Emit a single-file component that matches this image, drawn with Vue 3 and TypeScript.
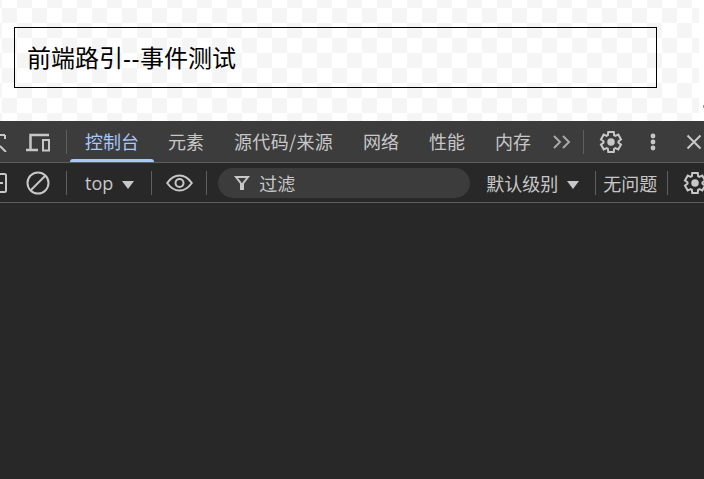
<script setup lang="ts">
const tabs = [
  { label: '元素', wide: false },
  { label: '源代码/来源', wide: true },
  { label: '网络', wide: false },
  { label: '性能', wide: false },
  { label: '内存', wide: false },
]
const gearPath =
  'M370-80l-16-128q-13-5-24.500-12T307-235l-119 50L78-375l103-78q-1-7-1-13.500v-27q0-6.500 1-13.500L78-585l110-190 119 50q11-8 23-15t24-12l16-128h220l16 128q13 5 24.500 12t22.500 15l119-50 110 190-103 78q1 7 1 13.500v27q0 6.500-2 13.500l103 78-110 190-118-50q-11 8-23 15t-24 12L590-80H370Z'
</script>

<template>
  <div class="page">
    <section class="preview">
      <div class="checker">
        <div class="box">前端路引<span class="dash">--</span>事件测试</div>
      </div>
      <i class="handle"></i>
    </section>
    <section class="devtools">
      <div class="tabbar">
        <svg class="inspect" viewBox="0 0 7 20" width="7" height="20"><path d="M0 3h5M5 3v4M0 14l6 6" fill="none" stroke="#c7c7c7" stroke-width="2"/></svg>
        <svg class="device" viewBox="0 0 24 20" width="24" height="20"><path d="M0 18h12M4.500 18V3H23" fill="none" stroke="#c7c7c7" stroke-width="2.500"/><rect x="17" y="8" width="6" height="10.500" fill="none" stroke="#c7c7c7" stroke-width="2"/></svg>
        <i class="sep tab-sep"></i>
        <span class="tab active">控制台</span>
        <span v-for="t in tabs" :key="t.label" class="tab" :class="{ wide: t.wide }">{{ t.label }}</span>
        <svg class="more" viewBox="0 0 20 14" width="20" height="14"><path d="M2 1l6 6-6 6M11 1l6 6-6 6" fill="none" stroke="#a8a8a8" stroke-width="2"/></svg>
        <i class="sep more-sep"></i>
        <svg class="gear" viewBox="0 -960 960 960" width="24" height="24"><path :d="gearPath" fill="none" stroke="#c7c7c7" stroke-width="80"/><circle cx="480" cy="-480" r="150" fill="#c7c7c7"/></svg>
        <svg class="dots" viewBox="0 0 6 18" width="6" height="18"><circle cx="3" cy="3" r="2.400" fill="#c7c7c7"/><circle cx="3" cy="9" r="2.400" fill="#c7c7c7"/><circle cx="3" cy="15" r="2.400" fill="#c7c7c7"/></svg>
        <svg class="close" viewBox="0 0 16 16" width="16" height="16"><path d="M1.500 1.500l13 13M14.500 1.500l-13 13" stroke="#c7c7c7" stroke-width="2"/></svg>
      </div>
      <div class="filterbar">
        <svg class="sidebar" viewBox="0 0 7 20" width="7" height="20"><path d="M0 1h4.500a1.500 1.500 0 0 1 1.500 1.500v15a1.500 1.500 0 0 1-1.500 1.500H0M0 10h3" fill="none" stroke="#c7c7c7" stroke-width="2"/></svg>
        <svg class="clear" viewBox="0 0 24 24" width="24" height="24"><circle cx="12" cy="12" r="10.500" fill="none" stroke="#c7c7c7" stroke-width="2"/><path d="M5 19L19 5" stroke="#c7c7c7" stroke-width="2"/></svg>
        <i class="sep s1"></i>
        <span class="context">top</span>
        <i class="caret"></i>
        <i class="sep s2"></i>
        <svg class="eye" viewBox="0 0 27 18" width="27" height="18"><path d="M1.200 9C5 3.500 9 1.500 13.500 1.500S22 3.500 25.800 9C22 14.500 18 16.500 13.500 16.500S5 14.500 1.200 9z" fill="none" stroke="#c7c7c7" stroke-width="2"/><circle cx="13.500" cy="9" r="4" fill="none" stroke="#c7c7c7" stroke-width="2"/></svg>
        <i class="sep s3"></i>
        <div class="search">
          <svg viewBox="0 0 16 16" width="16" height="16"><path d="M2 2h12L9 8.500V14H7V8.500z" fill="#3c3c3c" stroke="#c7c7c7" stroke-width="2"/></svg>
          <span>过滤</span>
        </div>
        <span class="level">默认级别</span>
        <i class="caret"></i>
        <i class="sep s4"></i>
        <span class="issues">无问题</span>
        <i class="sep s5"></i>
        <svg class="gear2" viewBox="0 -960 960 960" width="24" height="24"><path :d="gearPath" fill="none" stroke="#c7c7c7" stroke-width="80"/><circle cx="480" cy="-480" r="150" fill="#c7c7c7"/></svg>
      </div>
      <div class="console"></div>
    </section>
  </div>
</template>

<style>
html, body { margin: 0; background: #fff; overflow: hidden; }
</style>

<style scoped>
.page {
  width: 704px;
  height: 479px;
  display: flex;
  flex-direction: column;
  overflow: hidden;
  font-family: "Liberation Sans", "Noto Sans CJK SC", sans-serif;
}
.preview {
  height: 121px;
  flex: none;
  background: #fff;
  position: relative;
}
.handle {
  position: absolute;
  right: 0;
  top: 105px;
  width: 1px;
  height: 3px;
  background: #9a9a9a;
}
.checker {
  width: 699px;
  height: 121px;
  box-sizing: border-box;
  padding: 27px 42px 0 14px;
  background-color: #fff;
  background-image: conic-gradient(#f5f5f5 25%, #fff 0 50%, #f5f5f5 0 75%, #fff 0);
  background-size: 30px 30px;
  background-position: 17px 8px;
}
.box {
  height: 61px;
  box-sizing: border-box;
  border: 1px solid #000;
  padding-left: 12px;
  font-size: 24px;
  line-height: 62px;
  color: #000;
}
.dash { letter-spacing: 0.5px; }
.devtools {
  flex: 1;
  display: flex;
  flex-direction: column;
  background: #282828;
  color: #c7c7c7;
  overflow: hidden;
}
.tabbar {
  height: 42px;
  flex: none;
  display: flex;
  align-items: center;
  background: #3c3c3c;
  border-bottom: 1px solid #5e5e5e;
  box-sizing: border-box;
  font-family: "Noto Sans CJK SC", sans-serif;
  font-size: 18px;
  white-space: nowrap;
}
.tabbar > * { flex: none; }
.device { margin-left: 19px; }
.sep { display: block; width: 1px; height: 24px; background: #5e5e5e; flex: none; }
.tab-sep { margin-left: 16px; }
.tab {
  padding: 0 15px;
  line-height: 41px;
}
.tab.wide { letter-spacing: 0.33px; }
.tab.active {
  margin-left: 3px;
  margin-right: -1px;
  color: #a8c7fa;
  position: relative;
}
.tab.active::after {
  content: "";
  position: absolute;
  left: 0;
  right: 0;
  bottom: 0;
  height: 3px;
  border-radius: 3px 3px 0 0;
  background: #a8c7fa;
}
.more { margin-left: 6px; }
.more-sep { margin-left: 11px; }
.gear { margin-left: 15px; }
.dots { margin-left: 27px; }
.close { margin-left: 30px; }
.filterbar {
  height: 40px;
  flex: none;
  display: flex;
  align-items: center;
  box-sizing: border-box;
  border-bottom: 1px solid #5e5e5e;
  font-family: "Noto Sans CJK SC", sans-serif;
  font-size: 18px;
  white-space: nowrap;
}
.filterbar > * { flex: none; }
.clear { margin-left: 19px; }
.s1 { margin-left: 16px; }
.context {
  margin-left: 18px;
  font-family: "Open Sans", sans-serif;
}
.caret {
  display: block;
  width: 0;
  height: 0;
  border-left: 6px solid transparent;
  border-right: 6px solid transparent;
  border-top: 8px solid #c7c7c7;
  margin-left: 9px;
  margin-top: 5px;
}
.s2 { margin-left: 17px; }
.eye { margin-left: 14px; }
.s3 { margin-left: 13px; }
.search {
  margin-left: 11px;
  width: 252px;
  height: 30px;
  box-sizing: border-box;
  padding-left: 16px;
  border-radius: 15px;
  background: #3c3c3c;
  display: flex;
  align-items: center;
  gap: 9px;
}
.level { margin-left: 16px; }
.s4 { margin-left: 16px; }
.issues { margin-left: 7px; }
.s5 { margin-left: 10px; }
.gear2 { margin-left: 15px; }
.console { flex: 1; background: #282828; }
</style>
